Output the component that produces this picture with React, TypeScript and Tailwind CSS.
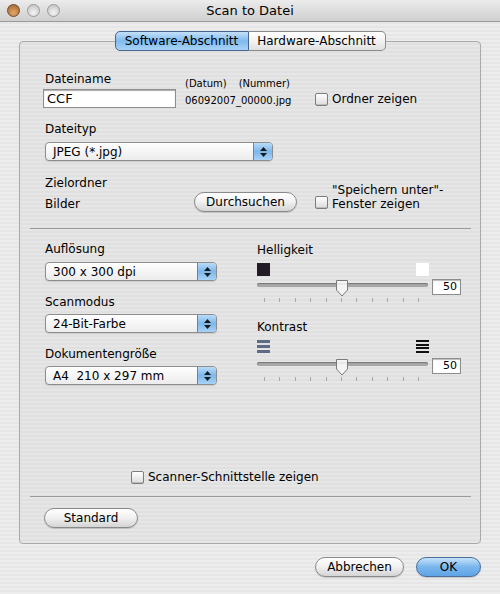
import React from "react";

const font = "font-['DejaVu_Sans',sans-serif]";

function Checkbox() {
  return (
    <span className="inline-block h-[13px] w-[13px] shrink-0 rounded-[2px] border border-[#7d7d7d] bg-gradient-to-b from-white to-[#dcdcdc] shadow-[inset_0_-1px_0_#bdbdbd]" />
  );
}

function AquaButton({ label, className = "", primary = false }: { label: string; className?: string; primary?: boolean }) {
  return (
    <div
      className={`flex h-[20px] items-center justify-center rounded-full border text-[12px] text-black ${
        primary
          ? "border-[#4a6d9c] bg-gradient-to-b from-[#c5e2fa] via-[#79b6ec] to-[#5fa4e6]"
          : "border-[#8a8a8a] bg-gradient-to-b from-white via-[#f0f0f0] to-[#d4d4d4]"
      } shadow-[0_1px_1px_rgba(0,0,0,0.15)] ${className}`}
    >
      {label}
    </div>
  );
}

function Select({ value, className = "" }: { value: string; className?: string }) {
  return (
    <div className={`flex h-[19px] overflow-hidden rounded-[4px] border border-[#8d8d8d] bg-gradient-to-b from-white to-[#ececec] shadow-[0_1px_1px_rgba(0,0,0,0.12)] ${className}`}>
      <div className="flex flex-1 items-center whitespace-pre pl-[7px] text-[12px] text-black">{value}</div>
      <div className="flex w-[19px] flex-col items-center justify-center gap-[2px] border-l border-[#5d86b8] bg-gradient-to-b from-[#b8dcf8] via-[#7cb8ec] to-[#a7d2f6]">
        <svg width="7" height="4" viewBox="0 0 7 4">
          <path d="M3.5 0 L7 4 L0 4 Z" fill="#1a1a1a" />
        </svg>
        <svg width="7" height="4" viewBox="0 0 7 4">
          <path d="M0 0 L7 0 L3.5 4 Z" fill="#1a1a1a" />
        </svg>
      </div>
    </div>
  );
}

function Slider() {
  const ticks = Array.from({ length: 11 }, (_, i) => i);
  return (
    <div className="flex items-start">
      <div className="relative h-[24px] w-[171px]">
        <div className="absolute left-0 right-0 top-[4px] h-[4px] rounded-full bg-[#a7a7a7] shadow-[inset_0_1px_1px_#777]" />
        <svg className="absolute left-[78px] top-[1px]" width="14" height="17" viewBox="0 0 14 17">
          <path d="M1.5 0.5 H12.5 V10 L7 16 L1.5 10 Z" fill="#f4f4f4" stroke="#7a7a7a" />
          <path d="M2.5 4 H11.5" stroke="#c8c8c8" strokeDasharray="1 1" />
        </svg>
        <div className="absolute left-[7px] top-[19px] flex w-[155px] justify-between">
          {ticks.map((t) => (
            <span key={t} className="h-[4px] w-px bg-[#a9a9a9]" />
          ))}
        </div>
      </div>
      <div className="ml-[4px] flex h-[16px] w-[29px] items-center justify-end border border-[#8c8c8c] bg-white pr-[3px] text-[11px] text-black shadow-[inset_0_1px_1px_#bbb]">
        50
      </div>
    </div>
  );
}

function LowContrast() {
  return (
    <div className="flex h-[13px] w-[13px] flex-col justify-between">
      <span className="h-[3px] w-full bg-[#5d6c84]" />
      <span className="h-[3px] w-full bg-[#5d6c84]" />
      <span className="h-[3px] w-full bg-[#5d6c84]" />
    </div>
  );
}

function HighContrast() {
  return (
    <div className="flex h-[13px] w-[13px] flex-col justify-between">
      <span className="h-[2px] w-full bg-[#111]" />
      <span className="h-[2px] w-full bg-[#111]" />
      <span className="h-[2px] w-full bg-[#111]" />
      <span className="h-[2px] w-full bg-[#111]" />
    </div>
  );
}

export default function App() {
  return (
    <div className={`flex h-[594px] w-[500px] flex-col overflow-hidden bg-[repeating-linear-gradient(0deg,#ededed_0px,#ededed_2px,#e6e6e6_2px,#e6e6e6_4px)] ${font}`}>
      {/* title bar */}
      <div className="relative flex h-[22px] shrink-0 items-center border-b border-[#9c9c9c] bg-gradient-to-b from-[#ececec] to-[#cfcfcf]">
        <div className="flex gap-[7px] pl-[7px]">
          <span className="h-[13px] w-[13px] rounded-full border border-[#6d4a2b] bg-[radial-gradient(circle_at_50%_70%,#e7a86a,#9a5c2c)]" />
          <span className="h-[13px] w-[13px] rounded-full border border-[#999] bg-[radial-gradient(circle_at_50%_70%,#f4f4f4,#bdbdbd)]" />
          <span className="h-[13px] w-[13px] rounded-full border border-[#999] bg-[radial-gradient(circle_at_50%_70%,#f4f4f4,#bdbdbd)]" />
        </div>
        <div className="absolute inset-0 flex items-center justify-center text-[13px] text-black">Scan to Datei</div>
      </div>

      <div className="flex flex-1 flex-col px-[19px] pt-[9px]">
        {/* tabs */}
        <div className="relative z-10 -mb-[10px] flex justify-center text-[12px] text-black">
          <div className="flex h-[20px] w-[134px] items-center justify-center rounded-l-[5px] border border-[#48648f] bg-gradient-to-b from-[#c3e0f9] via-[#7fbaee] to-[#a9d3f6]">
            Software-Abschnitt
          </div>
          <div className="flex h-[20px] w-[137px] items-center justify-center rounded-r-[5px] border border-l-0 border-[#8a8a8a] bg-gradient-to-b from-white via-[#f3f3f3] to-[#e0e0e0]">
            Hardware-Abschnitt
          </div>
        </div>

        {/* tab box */}
        <div className="flex h-[503px] flex-col rounded-[4px] border border-[#a9a9a9] bg-[repeating-linear-gradient(0deg,#e6e6e6_0px,#e6e6e6_2px,#e0e0e0_2px,#e0e0e0_4px)] text-[12px] text-black">
          {/* file name row */}
          <div className="mt-[29px] flex pl-[23px]">
            <div className="flex w-[133px] flex-col">
              <div className="h-[16px] pl-[2px] leading-[16px]">Dateiname</div>
              <div className="mt-[2px] flex h-[19px] items-center border border-[#8f8f8f] bg-white pl-[3px] text-[13px] shadow-[inset_0_1px_1px_#aaa]">
                CCF
              </div>
            </div>
            <div className="ml-[9px] flex w-[130px] flex-col text-[10px]">
              <div className="mt-[5px] flex h-[14px] items-center gap-[12px]">
                <span>(Datum)</span>
                <span>(Nummer)</span>
              </div>
              <div className="mt-[3px] flex h-[14px] items-center">06092007_00000.jpg</div>
            </div>
            <div className="mt-[21px] flex h-[14px] items-center gap-[4px]">
              <Checkbox />
              <span>Ordner zeigen</span>
            </div>
          </div>

          {/* file type */}
          <div className="mt-[13px] h-[16px] pl-[25px] leading-[16px]">Dateityp</div>
          <Select value="JPEG (*.jpg)" className="ml-[25px] mt-[5px] w-[228px]" />

          {/* target folder */}
          <div className="mt-[14px] flex pl-[25px]">
            <div className="flex w-[149px] flex-col">
              <div className="h-[16px] leading-[16px]">Zielordner</div>
              <div className="mt-[5px] h-[16px] leading-[16px]">Bilder</div>
            </div>
            <AquaButton label="Durchsuchen" className="mt-[17px] w-[103px]" />
            <div className="ml-[18px] mt-[8px] flex items-start gap-[4px]">
              <span className="mt-[13px]">
                <Checkbox />
              </span>
              <div className="leading-[14px]">
                "Speichern unter"-
                <br />
                Fenster zeigen
              </div>
            </div>
          </div>

          <div className="ml-[10px] mr-[9px] mt-[14px] h-px bg-[#9a9a9a]" />

          {/* scan settings */}
          <div className="flex pl-[25px]">
            <div className="flex w-[212px] flex-col">
              <div className="mt-[12px] h-[16px] leading-[16px]">Auflösung</div>
              <Select value="300 x 300 dpi" className="mt-[5px] w-[172px]" />
              <div className="mt-[13px] h-[16px] leading-[16px]">Scanmodus</div>
              <Select value="24-Bit-Farbe" className="mt-[4px] w-[172px]" />
              <div className="mt-[13px] h-[16px] leading-[16px]">Dokumentengröße</div>
              <Select value="A4  210 x 297 mm" className="mt-[4px] w-[172px]" />
            </div>
            <div className="flex w-[205px] flex-col">
              <div className="mt-[13px] h-[16px] leading-[16px]">Helligkeit</div>
              <div className="mt-[5px] flex w-[172px] justify-between">
                <span className="h-[13px] w-[13px] bg-[#221c26]" />
                <span className="h-[13px] w-[13px] bg-white" />
              </div>
              <div className="mt-[3px]">
                <Slider />
              </div>
              <div className="mt-[16px] h-[16px] leading-[16px]">Kontrast</div>
              <div className="mt-[5px] flex w-[172px] justify-between">
                <LowContrast />
                <HighContrast />
              </div>
              <div className="mt-[5px]">
                <Slider />
              </div>
            </div>
          </div>

          {/* bottom */}
          <div className="mt-auto flex flex-col pb-[15px]">
            <div className="flex h-[14px] items-center gap-[4px] pl-[111px]">
              <Checkbox />
              <span>Scanner-Schnittstelle zeigen</span>
            </div>
            <div className="ml-[10px] mr-[9px] mt-[12px] h-px bg-[#9a9a9a]" />
            <AquaButton label="Standard" className="ml-[24px] mt-[11px] w-[94px]" />
          </div>
        </div>

        {/* footer */}
        <div className="mt-[13px] flex justify-end gap-[12px] text-black">
          <AquaButton label="Abbrechen" className="w-[89px]" />
          <AquaButton label="OK" primary className="w-[65px]" />
        </div>
      </div>
    </div>
  );
}
